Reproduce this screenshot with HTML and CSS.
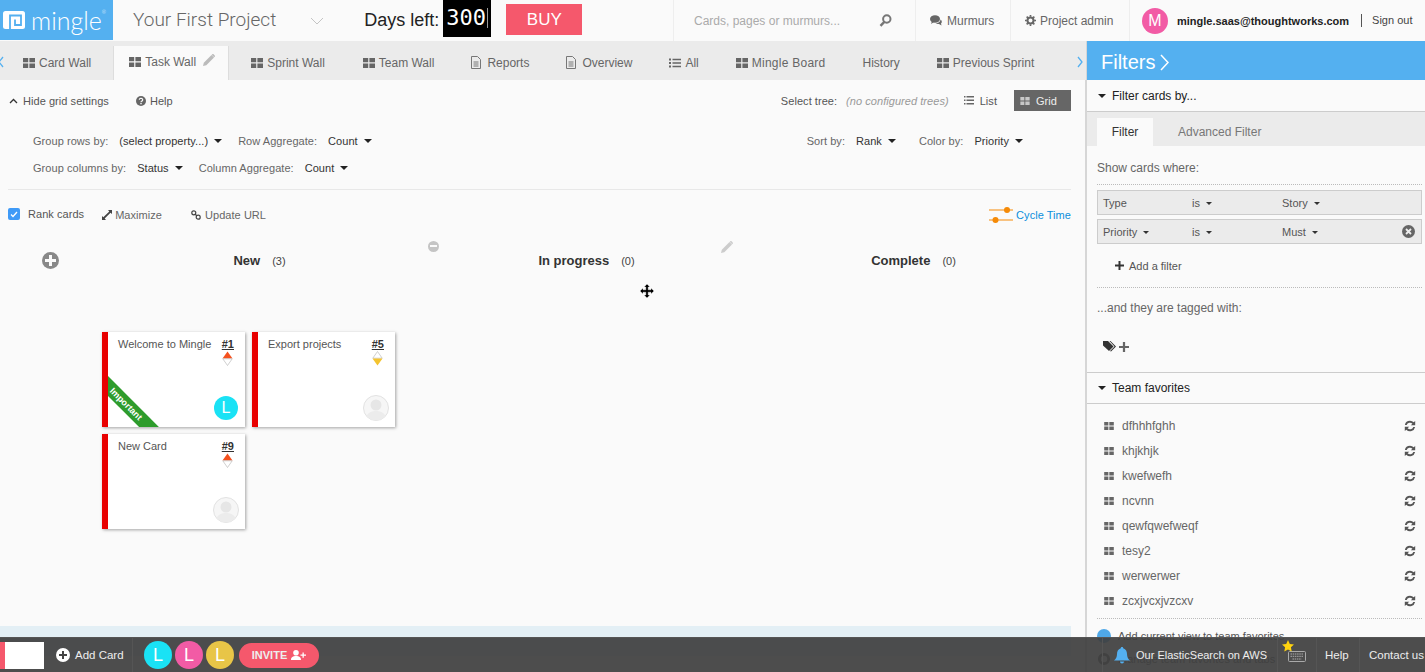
FILE: index.html
```html
<!DOCTYPE html>
<html lang="en">
<head>
    <meta charset="UTF-8">
    <title>Task Wall - Your First Project</title>
    <link rel="stylesheet" href="styles.css">
</head>
<body>
<svg class="defs" width="0" height="0">
    <symbol id="i-grid" viewBox="0 0 12 10"><path d="M0 0h5.200v4.300H0zM6.400 0H12v4.300H6.400zM0 5.500h5.200V10H0zM6.400 5.500H12V10H6.400z"/></symbol>
    <symbol id="i-doc" viewBox="0 0 10 13"><path fill="none" stroke="currentColor" d="M.5.5h6l3 3v9h-9zM2.500 6h5M2.500 8h5M2.500 10h5"/></symbol>
    <symbol id="i-sync" viewBox="0 0 12 12"><path d="M6 .8a5.200 5.200 0 0 1 3.700 1.500L11.200.9v4.400H6.800l1.600-1.600A3.400 3.400 0 0 0 2.700 5H.9A5.200 5.200 0 0 1 6 .8zM.8 6.700h4.400L3.600 8.300a3.400 3.400 0 0 0 5.700-1.300h1.800a5.200 5.200 0 0 1-8.800 2.700L.8 11.100z"/></symbol>
    <symbol id="i-face" viewBox="0 0 26 26"><circle cx="13" cy="13" r="12.500" fill="#f6f6f6" stroke="#e2e2e2"/><circle cx="13" cy="10" r="5.500" fill="#e6e6e6"/><path d="M3.500 21c2-4 6-5 9.500-5s7.500 1 9.500 5a12.500 12.500 0 0 1-19 0z" fill="#ececec"/></symbol>
    <symbol id="i-must" viewBox="0 0 11 15"><path d="M5.500 .5L10.500 7.500H.5z" fill="#f4511e"/><path d="M.8 7.800h9.400L5.500 14.500z" fill="#fff" stroke="#bbb" stroke-width=".7"/></symbol>
    <symbol id="i-should" viewBox="0 0 11 15"><path d="M.8 7.200h9.400L5.500 .5z" fill="#fff" stroke="#bbb" stroke-width=".7"/><path d="M.5 7.500h10L5.500 14.500z" fill="#f4c430"/></symbol>
</svg>

<div class="page">
    <header class="topbar">
        <a class="logo">
            <svg class="logo-mark" width="22" height="18" viewBox="0 0 22 18"><rect width="22" height="18" rx="2.500" fill="#fff"/><path d="M7 18V4.500h11V14h-6V8.500" fill="none" stroke="#54b0f0" stroke-width="1.800"/></svg>
            <span>mingle</span><sup>&reg;</sup>
        </a>
        <div class="project">Your First Project</div>
        <svg class="project-arrow" width="14" height="8" viewBox="0 0 14 8"><path d="M1 1l6 6 6-6" fill="none" stroke="#c4c4c4"/></svg>
        <div class="days">Days left:</div>
        <div class="days-count">300</div>
        <a class="buy">BUY</a>
        <div class="top-right">
            <div class="search top-cell">
                <span>Cards, pages or murmurs...</span>
                <svg width="13" height="13" viewBox="0 0 13 13"><circle cx="7.800" cy="5" r="3.700" fill="none" stroke="#777" stroke-width="2"/><path d="M5.300 7.800L1.500 11.800" stroke="#777" stroke-width="2.400"/></svg>
            </div>
            <a class="top-cell murmurs">
                <svg width="12" height="11" viewBox="0 0 12 11"><ellipse cx="5" cy="4" rx="5" ry="3.800" fill="#666"/><path d="M2 6l-1 3 3-2zM10.500 4.500c1.500 1 1.800 3 .5 4l.5 2-2.500-1.500c-1.500.3-2.500 0-3.500-.7 2.500 0 5-1.500 5-3.800z" fill="#666"/></svg>
                Murmurs
            </a>
            <a class="top-cell admin">
                <svg width="11" height="11" viewBox="0 0 12 12"><circle cx="6" cy="6" r="3.300" fill="none" stroke="#666" stroke-width="2.200"/><path d="M6 0v12M0 6h12M1.800 1.800l8.400 8.400M10.200 1.800l-8.400 8.400" stroke="#666" stroke-width="1.800" stroke-dasharray="2 8 2 0"/></svg>
                Project admin
            </a>
            <div class="user">
                <span class="avatar avatar-pink">M</span>
                <b>mingle.saas@thoughtworks.com</b>
                <a class="signout">Sign out</a>
            </div>
        </div>
    </header>

    <div class="columns">
        <main class="content">
            <nav class="tabs">
                <svg class="tab-arrow arrow-left" width="6" height="12" viewBox="0 0 6 12"><path d="M5 1L1 6l4 5" fill="none" stroke="#54b0f0" stroke-width="1.300"/></svg>
                <a class="tab tab-first"><svg class="ico"><use href="#i-grid"/></svg>Card Wall</a>
                <a class="tab tab-active"><svg class="ico"><use href="#i-grid"/></svg>Task Wall
                    <svg class="pencil" width="12" height="12" viewBox="0 0 12 12"><path d="M0 12l.8-3.300L8.500 1l2.500 2.500-7.700 7.700zM9.200.3a1 1 0 0 1 1.400 0l1.100 1.100a1 1 0 0 1 0 1.400l-.5.500L8.700.8z" fill="#bbb"/></svg>
                </a>
                <a class="tab tab-sprint"><svg class="ico"><use href="#i-grid"/></svg>Sprint Wall</a>
                <a class="tab"><svg class="ico"><use href="#i-grid"/></svg>Team Wall</a>
                <a class="tab"><svg class="ico ico-doc"><use href="#i-doc"/></svg>Reports</a>
                <a class="tab"><svg class="ico ico-doc"><use href="#i-doc"/></svg>Overview</a>
                <a class="tab"><svg class="ico" viewBox="0 0 12 10"><path d="M0 .5h2v2H0zM3.500 .8H12v1.400H3.500zM0 4h2v2H0zM3.500 4.300H12v1.400H3.500zM0 7.500h2v2H0zM3.500 7.800H12v1.400H3.500z"/></svg>All</a>
                <a class="tab tab-board"><svg class="ico"><use href="#i-grid"/></svg>Mingle Board</a>
                <a class="tab">History</a>
                <a class="tab"><svg class="ico"><use href="#i-grid"/></svg>Previous Sprint</a>
                <svg class="tab-arrow arrow-right" width="6" height="12" viewBox="0 0 6 12"><path d="M1 1l4 5-4 5" fill="none" stroke="#54b0f0" stroke-width="1.300"/></svg>
            </nav>

            <section class="settings">
                <div class="settings-top">
                    <a class="hide-grid">
                        <svg width="9" height="6" viewBox="0 0 9 6"><path d="M1 5l3.500-3.500L8 5" fill="none" stroke="#333" stroke-width="1.300"/></svg>
                        Hide grid settings
                    </a>
                    <a class="help">
                        <svg width="10" height="10" viewBox="0 0 10 10"><circle cx="5" cy="5" r="5" fill="#666"/><path d="M3.300 3.800a1.700 1.500 0 1 1 2.600 1.300c-.6.400-.9.600-.9 1.100" fill="none" stroke="#fafafa" stroke-width="1.200"/><path d="M4.300 7h1.400v1.300H4.300z" fill="#fafafa"/></svg>
                        Help
                    </a>
                    <div class="tree">
                        <span>Select tree:</span>
                        <i>(no configured trees)</i>
                        <a class="list-btn"><svg width="10" height="9" viewBox="0 0 10 9"><path d="M0 0h1.500v1.500H0zM2.500 0H10v1.500H2.500zM0 3.500h1.500V5H0zM2.500 3.500H10V5H2.500zM0 7h1.500v1.500H0zM2.500 7H10v1.500H2.500z" fill="#666"/></svg>List</a>
                        <a class="grid-btn"><svg width="10" height="8" viewBox="0 0 12 10"><use href="#i-grid" fill="#c8c8c8"/></svg>Grid</a>
                    </div>
                </div>
                <div class="props">
                    <div class="props-left">
                        <div class="prop-row">
                            <label>Group rows by:</label><a class="drop">(select property...)</a>
                            <label>Row Aggregate:</label><a class="drop">Count</a>
                        </div>
                        <div class="prop-row">
                            <label>Group columns by:</label><a class="drop">Status</a>
                            <label>Column Aggregate:</label><a class="drop">Count</a>
                        </div>
                    </div>
                    <div class="props-right">
                        <label>Sort by:</label><a class="drop drop-rank">Rank</a>
                        <label>Color by:</label><a class="drop">Priority</a>
                    </div>
                </div>
                <div class="actions">
                    <span class="check"><svg width="8" height="7" viewBox="0 0 8 7"><path d="M1 3.500l2 2L7 1" fill="none" stroke="#fff" stroke-width="1.300"/></svg></span>
                    <span class="rank">Rank cards</span>
                    <a class="maximize">
                        <svg width="10" height="10" viewBox="0 0 10 10"><path d="M6 0h4v4L8.500 2.700 2.700 8.500 4 10H0V6l1.300 1.300L7.300 1.500z" fill="#444"/></svg>
                        Maximize
                    </a>
                    <a class="update-url">
                        <svg width="10" height="10" viewBox="0 0 10 10"><g fill="none" stroke="#444" stroke-width="1.200"><circle cx="2.800" cy="2.800" r="2"/><circle cx="7.200" cy="7.200" r="2"/><path d="M4 4l2 2"/></g></svg>
                        Update URL
                    </a>
                    <a class="cycle">
                        <svg width="24" height="17" viewBox="0 0 24 17"><g fill="#f58a07"><path d="M0 2.500h24v1H0zM0 12.500h24v1H0z"/><circle cx="18" cy="3" r="3"/><circle cx="6.500" cy="13" r="3"/></g></svg>
                        Cycle Time
                    </a>
                </div>
            </section>

            <section class="board">
                <div class="board-head">
                    <div class="col-head">
                        <span class="round-btn add-col"></span>
                        <b>New</b><small>(3)</small>
                    </div>
                    <div class="col-head">
                        <span class="round-btn remove-col"></span>
                        <svg class="edit-col" width="12" height="12" viewBox="0 0 12 12"><path d="M0 12l.8-3.300L8.500 1l2.500 2.500-7.700 7.700zM9.200.3a1 1 0 0 1 1.400 0l1.100 1.100a1 1 0 0 1 0 1.400l-.5.500L8.700.8z" fill="#ccc"/></svg>
                        <b>In progress</b><small>(0)</small>
                    </div>
                    <div class="col-head">
                        <b>Complete</b><small>(0)</small>
                    </div>
                </div>
                <div class="cards">
                    <article class="card">
                        <div class="card-top">
                            <span class="card-title">Welcome to Mingle</span>
                            <div class="card-num"><a>#1</a><svg width="11" height="15"><use href="#i-must"/></svg></div>
                        </div>
                        <div class="ribbon">Important</div>
                        <span class="avatar avatar-cyan card-owner">L</span>
                    </article>
                    <article class="card">
                        <div class="card-top">
                            <span class="card-title">Export projects</span>
                            <div class="card-num"><a>#5</a><svg width="11" height="15"><use href="#i-should"/></svg></div>
                        </div>
                        <svg class="card-owner" width="26" height="26"><use href="#i-face"/></svg>
                    </article>
                    <article class="card">
                        <div class="card-top">
                            <span class="card-title">New Card</span>
                            <div class="card-num"><a>#9</a><svg width="11" height="15"><use href="#i-must"/></svg></div>
                        </div>
                        <svg class="card-owner" width="26" height="26"><use href="#i-face"/></svg>
                    </article>
                </div>
                <svg class="move-cursor" width="14" height="14" viewBox="0 0 14 14"><path d="M7 0l3 3H8.200v2.800H11V4l3 3-3 3V8.200H8.200V11H10l-3 3-3-3h1.800V8.200H3V10L0 7l3-3v1.800h2.800V3H4z" stroke="#fff" stroke-width=".4"/></svg>
                <div class="add-row-band"></div>
            </section>
        </main>

        <aside class="sidebar">
            <h2 class="filters-head">Filters
                <svg width="9" height="17" viewBox="0 0 9 17"><path d="M1 1l7 7.500L1 16" fill="none" stroke="#fff" stroke-width="1.500"/></svg>
            </h2>
            <h3 class="side-title"><span class="caret caret-dark"></span>Filter cards by...</h3>
            <div class="filter-tabs">
                <a class="filter-tab filter-tab-active">Filter</a>
                <a class="filter-tab">Advanced Filter</a>
            </div>
            <div class="filter-body">
                <p class="show-where">Show cards where:</p>
                <div class="filter-rows">
                    <div class="filter-row">
                        <span class="f-a">Type</span>
                        <span class="f-b drop-small">is</span>
                        <span class="f-c drop-small">Story</span>
                    </div>
                    <div class="filter-row">
                        <span class="f-a drop-small">Priority</span>
                        <span class="f-b drop-small">is</span>
                        <span class="f-c drop-small">Must</span>
                        <svg class="f-remove" width="13" height="13" viewBox="0 0 13 13"><circle cx="6.500" cy="6.500" r="6.500" fill="#666"/><path d="M4 4l5 5M9 4l-5 5" stroke="#eee" stroke-width="1.800"/></svg>
                    </div>
                </div>
                <a class="add-filter"><svg width="9" height="9" viewBox="0 0 9 9"><path d="M3.500 0h2v3.500H9v2H5.500V9h-2V5.500H0v-2h3.500z" fill="#333"/></svg>Add a filter</a>
                <p class="tagged">...and they are tagged with:</p>
                <div class="tag-add">
                    <svg width="13" height="11" viewBox="0 0 13 11"><path d="M0 0h5l5.500 5.500L6 10 0 4.500z" fill="#333"/><path d="M6.500 0h1l5.500 5.500L8 10.500l-1-.5 4.500-4.500z" fill="#333"/></svg>
                    <svg width="10" height="10" viewBox="0 0 9 9"><path d="M3.500 0h2v3.500H9v2H5.500V9h-2V5.500H0v-2h3.500z" fill="#666"/></svg>
                </div>
            </div>
            <h3 class="side-title side-title-fav"><span class="caret caret-dark"></span>Team favorites</h3>
            <ul class="favs">
                <li><svg class="ico"><use href="#i-grid"/></svg><span>dfhhhfghh</span><svg class="sync"><use href="#i-sync"/></svg></li>
                <li><svg class="ico"><use href="#i-grid"/></svg><span>khjkhjk</span><svg class="sync"><use href="#i-sync"/></svg></li>
                <li><svg class="ico"><use href="#i-grid"/></svg><span>kwefwefh</span><svg class="sync"><use href="#i-sync"/></svg></li>
                <li><svg class="ico"><use href="#i-grid"/></svg><span>ncvnn</span><svg class="sync"><use href="#i-sync"/></svg></li>
                <li><svg class="ico"><use href="#i-grid"/></svg><span>qewfqwefweqf</span><svg class="sync"><use href="#i-sync"/></svg></li>
                <li><svg class="ico"><use href="#i-grid"/></svg><span>tesy2</span><svg class="sync"><use href="#i-sync"/></svg></li>
                <li><svg class="ico"><use href="#i-grid"/></svg><span>werwerwer</span><svg class="sync"><use href="#i-sync"/></svg></li>
                <li><svg class="ico"><use href="#i-grid"/></svg><span>zcxjvcxjvzcxv</span><svg class="sync"><use href="#i-sync"/></svg></li>
            </ul>
            <div class="fav-actions">
                <a><span class="fav-dot"></span>Add current view to team favorites</a>
                <a><svg width="14" height="14" viewBox="0 0 12 12"><circle cx="6" cy="6" r="4" fill="none" stroke="#555" stroke-width="2.400"/></svg>Manage team favorites and tabs</a>
            </div>
        </aside>
    </div>

    <footer class="bottombar">
        <div class="quick-box"></div>
        <a class="add-card">
            <svg width="14" height="14" viewBox="0 0 14 14"><circle cx="7" cy="7" r="7" fill="#fff"/><path d="M6 3h2v3h3v2H8v3H6V8H3V6h3z" fill="#444"/></svg>
            Add Card
        </a>
        <div class="team">
            <span class="avatar avatar-cyan">L</span>
            <span class="avatar avatar-pink">L</span>
            <span class="avatar avatar-yellow">L</span>
            <a class="invite">INVITE
                <svg width="15" height="10" viewBox="0 0 15 10"><circle cx="5" cy="2.800" r="2.800" fill="#fff"/><path d="M0 10c0-3 2-4 5-4s5 1 5 4zM11.500 2.500h1.300v2H15v1.300h-2.200v2h-1.300v-2H9.500V4.500h2z" fill="#fff"/></svg>
            </a>
        </div>
        <div class="bar-right">
            <a class="bar-cell news">
                <svg width="16" height="17" viewBox="0 0 16 17"><path d="M8 0c.8 0 1.200.5 1.200 1.200C12 2 13 4.500 13 7c0 3 1 5 3 6.500H0C2 12 3 10 3 7c0-2.500 1-5 3.800-5.800C6.800.5 7.200 0 8 0zM6 14.500h4a2 2 0 0 1-4 0z" fill="#54b0f0"/></svg>
                Our ElasticSearch on AWS
            </a>
            <a class="bar-cell keys">
                <svg class="star" width="12" height="12" viewBox="0 0 12 12"><path d="M6 0l1.800 3.900 4.200.5-3.100 2.900.8 4.200L6 9.400l-3.700 2.100.8-4.200L0 4.400l4.200-.5z" fill="#ffd30f"/></svg>
                <svg width="18" height="11" viewBox="0 0 18 11"><rect x=".5" y=".5" width="17" height="10" rx="1" fill="none" stroke="#aaa"/><path d="M2.500 3h13M2.500 5.300h13M4.500 8h9" stroke="#aaa" stroke-dasharray="1.500 .7"/></svg>
            </a>
            <a class="bar-cell help-cell">Help</a>
            <a class="bar-cell contact">Contact us</a>
        </div>
    </footer>
</div>
</body>
</html>
```

FILE: styles.css
```css
* {
    box-sizing: border-box;
}
html, body {
    margin: 0;
    height: 100%;
    overflow: hidden;
}
body {
    font-family: "Liberation Sans", Arial, sans-serif;
    font-size: 11px;
    color: #555;
    background-color: #fafafa;
}
a {
    color: inherit;
    text-decoration: none;
}
.defs {
    position: absolute;
}
.page {
    position: relative;
    height: 672px;
    display: flex;
    flex-direction: column;
    overflow: hidden;
}

/* top bar */
.topbar {
    height: 41px;
    display: flex;
    align-items: center;
    flex: none;
}
.logo {
    width: 113px;
    height: 40px;
    margin-top: -1px;
    flex: none;
    display: flex;
    align-items: center;
    gap: 6px;
    padding-left: 3px;
    background-color: #54b0f0;
    color: #fff;
    font-family: Lato, sans-serif;
    font-weight: 300;
    font-size: 25px;
}
.logo-mark {
    flex: none;
}
.logo sup {
    margin: -16px 0 0 -6px;
    font-size: 5px;
}
.project {
    margin-left: 20px;
    margin-top: -2px;
    font-size: 19px;
    font-family: Roboto, sans-serif;
    font-weight: 300;
    color: #666;
}
.project-arrow {
    margin-left: 34px;
}
.days {
    margin-left: 40px;
    font-size: 18px;
    color: #222;
}
.days-count {
    width: 48px;
    height: 37px;
    margin-left: 4px;
    margin-top: -4px;
    padding-left: 3px;
    background-color: #000;
    color: #fff;
    font-family: "DejaVu Sans Mono", monospace;
    font-size: 22px;
    line-height: 35px;
}
.days-count::after {
    content: "";
    display: inline-block;
    width: 1px;
    height: 20px;
    margin-left: 1px;
    vertical-align: -3px;
    background-color: #999;
}
.buy {
    width: 76px;
    height: 31px;
    margin-left: 15px;
    margin-top: -3px;
    background-color: #f5586c;
    color: #fff;
    font-size: 17px;
    line-height: 31px;
    text-align: center;
}
.top-right {
    margin-left: auto;
    height: 41px;
    display: flex;
}
.top-cell {
    display: flex;
    align-items: center;
    gap: 5px;
    border-left: 1px solid #eee;
    font-size: 12px;
    color: #666;
}
.search {
    width: 242px;
    padding: 0 23px 0 20px;
    justify-content: space-between;
    color: #aaa;
}
.murmurs {
    width: 95px;
    padding-left: 14px;
}
.admin {
    width: 119px;
    padding-left: 14px;
    gap: 4px;
}
.user {
    width: 296px;
    display: flex;
    align-items: center;
    padding-left: 12px;
    border-left: 1px solid #eee;
    font-size: 11px;
}
.user b {
    margin-left: 9px;
    color: #222;
}
.signout {
    margin-left: 12px;
    padding-left: 10px;
    border-left: 1px solid #555;
    line-height: 13px;
    color: #444;
}
.avatar {
    width: 26px;
    height: 26px;
    flex: none;
    display: inline-block;
    border-radius: 50%;
    color: #fff;
    font-size: 16px;
    line-height: 26px;
    text-align: center;
}
.avatar-pink {
    background-color: #f25ba5;
}
.avatar-cyan {
    background-color: #1ae2f5;
}
.avatar-yellow {
    background-color: #e8c547;
}

/* main area */
.columns {
    flex: 1;
    display: flex;
    min-height: 0;
}
.content {
    width: 1086px;
    flex: none;
    display: flex;
    flex-direction: column;
}
.tabs {
    position: relative;
    height: 39px;
    flex: none;
    display: flex;
    align-items: flex-end;
    background-color: #ebebeb;
    font-size: 12px;
    color: #666;
}
.tab {
    height: 33px;
    display: flex;
    align-items: center;
    padding-bottom: 2px;
    margin-right: 37px;
    white-space: nowrap;
}
.tab-first {
    margin-left: 23px;
    margin-right: 22px;
}
.tab-active {
    width: 116px;
    height: 34px;
    padding-left: 15px;
    margin-right: 22px;
    border-left: 1px solid #ddd;
    border-right: 1px solid #ddd;
    background-color: #fafafa;
    position: relative;
}
.tab-sprint {
    margin-right: 38px;
}
.tab-board {
    letter-spacing: .25px;
}
.pencil {
    margin-left: 7px;
    margin-top: -4px;
}
.ico {
    width: 12px;
    height: 10px;
    margin-right: 4px;
    fill: #666;
    flex: none;
}
.ico-doc {
    height: 13px;
    color: #777;
    width: 10px;
    margin-right: 6px;
}
.tab-arrow {
    position: absolute;
    top: 15px;
}
.arrow-left {
    left: -2px;
}
.arrow-right {
    left: 1077px;
}

/* grid settings */
.settings {
    margin: 0 15px 0 8px;
    flex: none;
    font-size: 11px;
    letter-spacing: .05px;
}
.settings-top {
    height: 41px;
    display: flex;
    align-items: center;
    color: #555;
}
.hide-grid {
    display: flex;
    align-items: center;
    gap: 5px;
    margin-left: 1px;
}
.help {
    display: flex;
    align-items: center;
    gap: 4px;
    margin-left: 27px;
}
.tree {
    margin-left: auto;
    display: flex;
    align-items: center;
}
.tree i {
    margin-left: 9px;
    color: #999;
}
.list-btn {
    display: flex;
    align-items: center;
    gap: 6px;
    margin-left: 15px;
    margin-right: 17px;
}
.grid-btn {
    width: 57px;
    height: 21px;
    display: flex;
    align-items: center;
    gap: 6px;
    padding-left: 6px;
    background-color: #666;
    color: #eee;
}
.props {
    height: 69px;
    display: flex;
    justify-content: space-between;
    padding-left: 25px;
    border-bottom: 1px solid #e8e8e8;
}
.prop-row {
    height: 27px;
    display: flex;
    align-items: center;
}
.props-left {
    padding-top: 6px;
}
.props-right {
    display: flex;
    height: 27px;
    margin-top: 6px;
    align-items: center;
    padding-right: 48px;
}
.props label {
    color: #666;
}
.drop {
    margin-left: 11px;
    margin-right: 16px;
    color: #333;
}
.drop-rank {
    margin-right: 23px;
}
.drop::after {
    content: "";
    display: inline-block;
    margin-left: 6px;
    vertical-align: 2px;
    border: 4px solid transparent;
    border-top-color: #222;
    border-bottom: 0;
}
.props-right .drop:last-child {
    margin-right: 0;
}
.actions {
    height: 48px;
    display: flex;
    align-items: center;
}
.check {
    width: 12px;
    height: 12px;
    display: flex;
    align-items: center;
    justify-content: center;
    border-radius: 2px;
    background-color: #3f9af7;
}
.rank {
    margin-left: 8px;
    color: #555;
}
.maximize, .update-url {
    display: flex;
    align-items: center;
    gap: 3px;
    margin-top: 2px;
    color: #666;
}
.maximize {
    margin-left: 18px;
}
.update-url {
    gap: 4px;
    margin-left: 29px;
}
.cycle {
    margin-left: auto;
    display: flex;
    align-items: center;
    gap: 3px;
    margin-top: 2px;
    color: #0b8fdc;
}

/* board */
.board {
    position: relative;
    flex: 1;
    min-height: 0;
}
.board-head {
    height: 94px;
    margin-left: 96px;
    display: grid;
    grid-template-columns: repeat(3, 327px);
}
.col-head {
    position: relative;
    padding-top: 15px;
    text-align: center;
    white-space: nowrap;
}
.col-head b {
    font-size: 13px;
    color: #333;
}
.col-head small {
    margin-left: 12px;
    font-size: 11px;
    color: #444;
}
.round-btn {
    position: absolute;
    border-radius: 50%;
}
.add-col {
    left: -54px;
    top: 14px;
    width: 17px;
    height: 17px;
    background-color: #888;
}
.add-col::after {
    content: "";
    position: absolute;
    left: 3px;
    top: 7px;
    width: 11px;
    height: 3px;
    background-color: #fafafa;
}
.add-col::before {
    content: "";
    position: absolute;
    left: 7px;
    top: 3px;
    width: 3px;
    height: 11px;
    background-color: #fafafa;
}
.remove-col {
    left: 5px;
    top: 3px;
    width: 11px;
    height: 11px;
    background-color: #c4c4c4;
}
.remove-col::after {
    content: "";
    position: absolute;
    left: 2px;
    top: 4px;
    width: 7px;
    height: 2px;
    background-color: #fafafa;
}
.edit-col {
    position: absolute;
    left: 298px;
    top: 3px;
}
.cards {
    margin-left: 102px;
    width: 300px;
    display: flex;
    flex-wrap: wrap;
    gap: 7px;
}
.card {
    position: relative;
    width: 143px;
    height: 95px;
    overflow: hidden;
    border-left: 6px solid #e80000;
    background-color: #fff;
    box-shadow: 1px 1px 3px rgba(0, 0, 0, .35);
    color: #555;
}
.card-top {
    display: flex;
    justify-content: space-between;
    padding: 6px 11px 0 10px;
}
.card-num {
    display: flex;
    flex-direction: column;
    align-items: center;
}
.card-num a {
    font-weight: bold;
    color: #333;
    text-decoration: underline;
}
.card-num svg {
    margin-top: 1px;
}
.ribbon {
    position: absolute;
    left: -23px;
    top: 65px;
    width: 82px;
    height: 14px;
    transform: rotate(45deg);
    background-color: #2e9c2c;
    color: #fff;
    font-size: 9px;
    font-weight: bold;
    line-height: 15px;
    text-align: center;
}
.card-owner {
    position: absolute;
    right: 6px;
    bottom: 6px;
}
.avatar-cyan.card-owner {
    width: 24px;
    height: 24px;
    right: 7px;
    bottom: 7px;
    line-height: 24px;
}
.move-cursor {
    position: absolute;
    left: 640px;
    top: 46px;
}
.add-row-band {
    position: absolute;
    left: 0;
    right: 15px;
    top: 388px;
    height: 30px;
    background-color: #e3eff5;
}

/* sidebar */
.sidebar {
    flex: 1;
    min-width: 0;
    border-left: 2px solid #d6d6d6;
    margin-left: -1px;
    overflow: hidden;
}
.filters-head {
    height: 39px;
    margin: 0;
    padding: 3px 0 0 14px;
    display: flex;
    align-items: center;
    gap: 5px;
    background-color: #54b0f0;
    color: #fff;
    font-size: 20px;
    font-weight: normal;
}
.side-title {
    height: 32px;
    margin: 0;
    padding-left: 11px;
    display: flex;
    align-items: center;
    gap: 6px;
    border-bottom: 1px solid #ccc;
    font-size: 12px;
    font-weight: normal;
    color: #222;
}
.caret {
    border: 4px solid transparent;
    border-top-color: #222;
    border-bottom: 0;
}
.filter-tabs {
    height: 34px;
    display: flex;
    align-items: flex-end;
    padding-left: 10px;
    background-color: #ebebeb;
    font-size: 12px;
}
.filter-tab {
    height: 28px;
    line-height: 28px;
    padding: 0 25px;
    color: #777;
}
.filter-tab-active {
    width: 56px;
    padding: 0;
    text-align: center;
    background-color: #fafafa;
    color: #333;
}
.filter-body {
    height: 227px;
    padding: 0 3px 0 10px;
    border-bottom: 1px solid #ccc;
    font-size: 12px;
    color: #666;
}
.show-where {
    height: 39px;
    margin: 0;
    padding-top: 15px;
    border-bottom: 1px dotted #bbb;
}
.filter-rows {
    display: flex;
    flex-direction: column;
    gap: 4px;
    margin-top: 5px;
}
.filter-row {
    height: 25px;
    display: flex;
    align-items: center;
    padding-left: 5px;
    border: 1px solid #ccc;
    background-color: #ebebeb;
    font-size: 11px;
    color: #555;
}
.f-a {
    width: 89px;
}
.f-b {
    width: 90px;
}
.f-remove {
    margin-left: auto;
    margin-right: 6px;
}
.drop-small::after {
    content: "";
    display: inline-block;
    margin-left: 6px;
    vertical-align: 2px;
    border: 3px solid transparent;
    border-top-color: #333;
    border-bottom: 0;
}
.add-filter {
    height: 44px;
    display: flex;
    align-items: center;
    gap: 5px;
    padding-left: 18px;
    border-bottom: 1px dotted #bbb;
    font-size: 11px;
    color: #555;
}
.tagged {
    margin: 13px 0 0;
    font-size: 12px;
}
.tag-add {
    display: flex;
    align-items: center;
    gap: 3px;
    margin: 26px 0 0 6px;
}
.side-title-fav {
    height: 31px;
}
.favs {
    margin: 0 3px 0 10px;
    padding: 9px 0 5px;
    list-style: none;
    border-bottom: 1px dotted #bbb;
}
.favs li {
    height: 25px;
    display: flex;
    align-items: center;
    padding-left: 7px;
    font-size: 12px;
    color: #666;
}
.favs .ico {
    width: 10px;
    height: 8px;
    margin-right: 8px;
}
.favs span {
    flex: 1;
}
.sync {
    width: 12px;
    height: 12px;
    margin-right: 6px;
    fill: #555;
}
.fav-actions {
    padding-top: 5px;
}
.fav-actions a {
    height: 23px;
    display: flex;
    align-items: center;
    gap: 7px;
    padding-left: 10px;
    font-size: 11px;
    color: #555;
}
.fav-dot {
    width: 14px;
    height: 14px;
    border-radius: 50%;
    background-color: #4fa8e8;
}

/* bottom bar sits over the page */
.bottombar {
    position: absolute;
    left: 0;
    right: 0;
    bottom: 0;
    height: 35px;
    display: flex;
    align-items: center;
    border-top: 1px solid #555;
    background-color: rgba(64, 64, 64, .93);
    color: #eee;
    font-size: 11.5px;
}
.quick-box {
    width: 44px;
    height: 27px;
    border-left: 5px solid #f5586c;
    background-color: #fff;
}
.add-card {
    height: 100%;
    width: 89px;
    display: flex;
    align-items: center;
    gap: 5px;
    padding-left: 12px;
    border-right: 1px solid #555;
}
.team {
    display: flex;
    align-items: center;
    gap: 3px;
    margin-left: 11px;
}
.team .avatar {
    width: 28px;
    height: 28px;
    line-height: 28px;
    font-size: 18px;
}
.invite {
    width: 80px;
    height: 25px;
    display: flex;
    align-items: center;
    justify-content: center;
    gap: 4px;
    margin-left: 2px;
    border-radius: 13px;
    background-color: #f5586c;
    font-size: 11px;
    font-weight: bold;
}
.bar-right {
    margin-left: auto;
    height: 100%;
    display: flex;
}
.bar-cell {
    position: relative;
    display: flex;
    align-items: center;
    border-left: 1px solid #555;
    white-space: nowrap;
}
.news {
    width: 175px;
    gap: 6px;
    padding-left: 11px;
    font-size: 11px;
}
.keys {
    width: 39px;
    justify-content: center;
    padding-top: 3px;
}
.star {
    position: absolute;
    left: 4px;
    top: 2px;
}
.help-cell {
    width: 43px;
    padding-left: 8px;
}
.contact {
    width: 66px;
    padding-left: 9px;
}
```
